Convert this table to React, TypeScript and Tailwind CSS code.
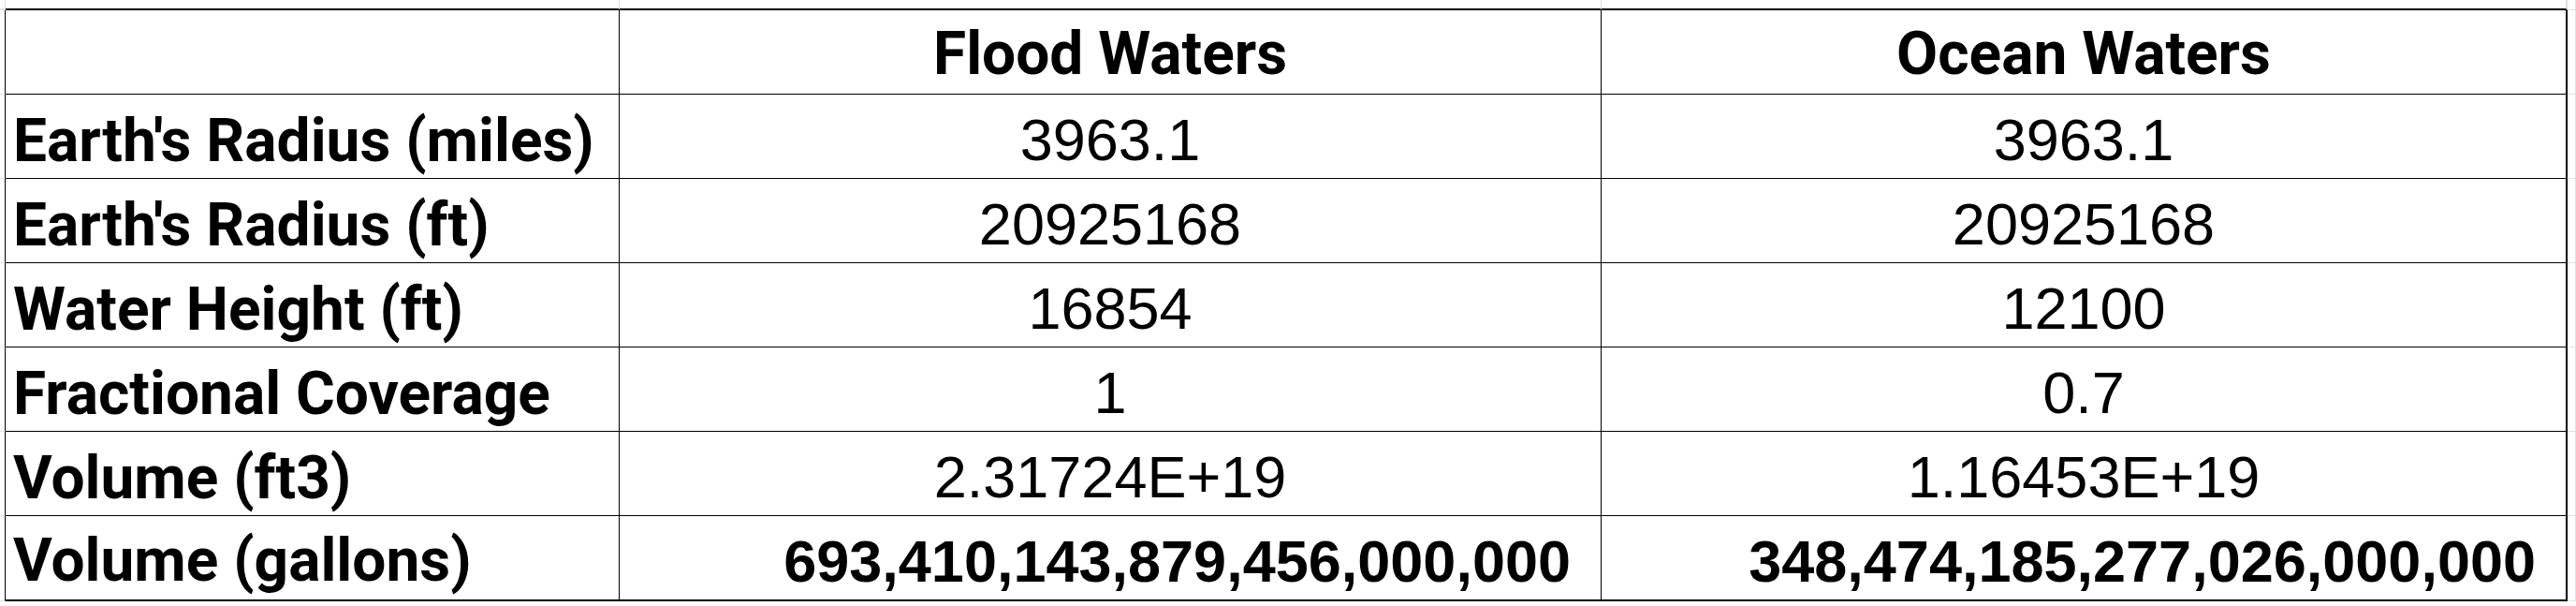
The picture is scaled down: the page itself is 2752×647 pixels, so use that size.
const rows = [
  { label: "Earth's Radius (miles)", flood: '3963.1', ocean: '3963.1' },
  { label: "Earth's Radius (ft)", flood: '20925168', ocean: '20925168' },
  { label: 'Water Height (ft)', flood: '16854', ocean: '12100' },
  { label: 'Fractional Coverage', flood: '1', ocean: '0.7' },
  { label: 'Volume (ft3)', flood: '2.31724E+19', ocean: '1.16453E+19' },
]

const labelFont = "font-['Roboto','Liberation_Sans',sans-serif] font-bold text-[64px] leading-none"
const numFont = "font-['Liberation_Sans',Arial,sans-serif] text-[63px] leading-none"

// outside gridline cells (faint excel grid)
const ghost = 'border-r border-b border-[#e1e1e1]'

export default function App() {
  return (
    <div className="h-[647px] w-[2752px] overflow-hidden bg-white text-black">
      <div className="grid grid-cols-[6px_656px_1049px_1032px_1fr] grid-rows-[11px_repeat(6,90px)_91px_1fr]">
        {/* top strip */}
        <div className="border-r border-b-2 border-r-[#e1e1e1] border-b-[#e1e1e1]" />
        <div className="border-r border-b-2 border-r-[#e1e1e1] border-b-black" />
        <div className="border-r border-b-2 border-r-[#e1e1e1] border-b-black" />
        <div className="border-r-2 border-b-2 border-r-[#e1e1e1] border-b-black" />
        <div className={ghost} />

        {/* header */}
        <div className="border-r border-b border-r-black border-b-[#e1e1e1]" />
        <div className="border-r border-b border-black" />
        <div className={`flex items-end justify-center border-r border-b border-black pb-[10px] ${labelFont}`}>
          Flood Waters
        </div>
        <div className={`flex items-end justify-center border-r-2 border-b border-black pb-[10px] ${labelFont}`}>
          Ocean Waters
        </div>
        <div className={ghost} />

        {rows.map((r) => (
          <Row key={r.label} label={r.label} flood={r.flood} ocean={r.ocean} />
        ))}

        {/* last row */}
        <div className="border-r border-b border-r-black border-b-[#e1e1e1]" />
        <div className={`flex items-end border-r border-b-2 border-black pb-[9px] pl-[8px] ${labelFont}`}>
          Volume (gallons)
        </div>
        <div className={`flex items-end justify-end border-r border-b-2 border-black pb-[9px] pr-[32px] font-bold ${numFont}`}>
          693,410,143,879,456,000,000
        </div>
        <div className={`flex items-end justify-end border-r-2 border-b-2 border-black pb-[9px] pr-[32px] font-bold ${numFont}`}>
          348,474,185,277,026,000,000
        </div>
        <div className={ghost} />

        {/* bottom strip */}
        <div className="border-r border-[#e1e1e1]" />
        <div className="border-r border-[#e1e1e1]" />
        <div className="border-r border-[#e1e1e1]" />
        <div className="border-r border-[#e1e1e1]" />
        <div />
      </div>
    </div>
  )
}

function Row({ label, flood, ocean }: { label: string; flood: string; ocean: string }) {
  return (
    <>
      <div className="border-r border-b border-r-black border-b-[#e1e1e1]" />
      <div className={`flex items-end border-r border-b border-black pb-[7px] pl-[8px] ${labelFont}`}>
        {label}
      </div>
      <div className={`flex items-end justify-center border-r border-b border-black pb-[9px] ${numFont}`}>
        {flood}
      </div>
      <div className={`flex items-end justify-center border-r-2 border-b border-black pb-[9px] ${numFont}`}>
        {ocean}
      </div>
      <div className={ghost} />
    </>
  )
}
